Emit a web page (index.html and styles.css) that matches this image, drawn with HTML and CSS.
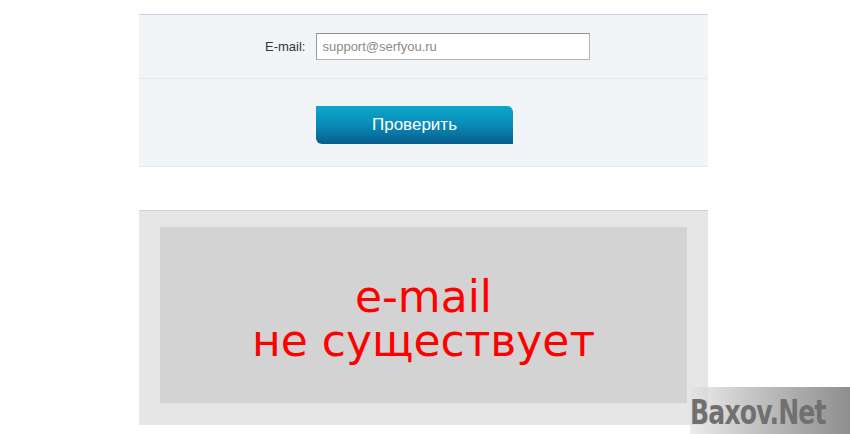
FILE: index.html
```html
<!DOCTYPE html>
<html>
<head>
<meta charset="utf-8">
<link rel="stylesheet" href="styles.css">
</head>
<body>
<div class="page">
  <div class="form-panel">
    <div class="row row-email">
      <label class="label">E-mail:</label>
      <div class="input">support@serfyou.ru</div>
    </div>
    <div class="row row-button">
      <button class="btn">Проверить</button>
    </div>
  </div>
  <div class="result-panel">
    <div class="result-box">
      <div class="result-text">e-mail<br>не существует</div>
    </div>
  </div>
</div>
<div class="watermark"><span>Baxov.Net</span></div>
</body>
</html>
```
FILE: styles.css
```css
html, body {
  margin: 0;
  padding: 0;
  background: #ffffff;
  width: 850px;
  height: 434px;
  overflow: hidden;
  font-family: "Liberation Sans", Arial, sans-serif;
}
.page {
  width: 569px;
  margin-left: 139px;
  padding-top: 14px;
}
.form-panel {
  background: #f2f5f7;
  border-top: 1px solid #c6d5e1;
}
.row {
  border-bottom: 1px solid #e4e9ec;
  box-sizing: border-box;
}
.row-email {
  height: 64px;
  display: flex;
  align-items: center;
  padding-left: 126px;
  gap: 11px;
}
.label {
  font-size: 13px;
  color: #333;
}
.input {
  width: 274px;
  height: 27px;
  box-sizing: border-box;
  background: #fff;
  border: 1px solid #b4b4b4;
  border-top-color: #8e8e8e;
  border-left-color: #9a9a9a;
  font-size: 13px;
  color: #8a8a8a;
  line-height: 25px;
  padding-left: 5px;
}
.row-button {
  height: 88px;
  padding-top: 27px;
  padding-left: 177px;
}
.btn {
  display: block;
  width: 197px;
  height: 38px;
  border: none;
  border-radius: 0 6px 0 6px;
  background: linear-gradient(to bottom, #0aa6cc 0%, #0a8bb7 50%, #075c8c 100%);
  color: #fff;
  font-family: "Liberation Sans", Arial, sans-serif;
  font-size: 17px;
  padding: 0;
  margin: 0;
}
.result-panel {
  margin-top: 43px;
  background: #e6e6e6;
  border-top: 1px solid #d2d2d2;
  padding: 16px 21px 22px 21px;
}
.result-box {
  background: #d3d3d3;
  height: 176px;
  display: flex;
  align-items: center;
  justify-content: center;
}
.result-text {
  color: #ff0000;
  font-family: "DejaVu Sans", Verdana, sans-serif;
  font-size: 44px;
  line-height: 44px;
  text-align: center;
  padding-top: 8px;
}
.watermark {
  position: absolute;
  left: 690px;
  top: 387px;
  width: 160px;
  height: 47px;
  background: linear-gradient(to right, rgba(225,225,225,0.6) 0%, #c8c8c8 35%, #8e8e8e 100%);
  display: flex;
  align-items: center;
}
.watermark span {
  font-family: "DejaVu Sans Condensed", "DejaVu Sans", sans-serif;
  font-weight: bold;
  font-size: 34px;
  color: #707070;
  letter-spacing: -1px;
  transform: scaleX(0.82);
  transform-origin: left center;
  margin-top: 3px;
  white-space: nowrap;
}
```
